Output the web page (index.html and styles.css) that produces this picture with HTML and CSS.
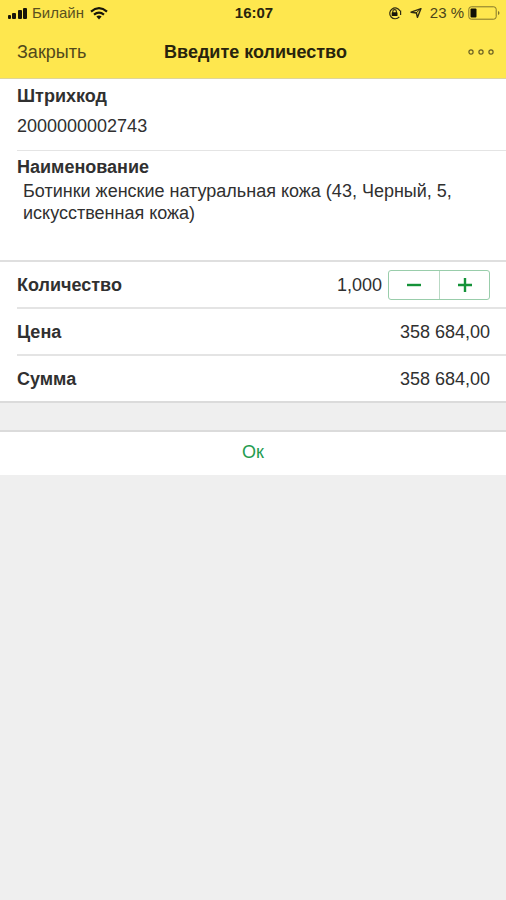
FILE: index.html
```html
<!DOCTYPE html>
<html lang="ru">
<head>
<meta charset="utf-8">
<meta name="viewport" content="width=device-width, initial-scale=1">
<title>Введите количество</title>
<link rel="stylesheet" href="styles.css">
</head>
<body>
<header class="header">
  <div class="status">
    <div class="status-left">
      <svg width="20" height="12" viewBox="0 0 20 12" fill="#17150a" aria-hidden="true"><rect x="0" y="8" width="3" height="4" rx="1"/><rect x="4" y="6" width="4" height="6" rx="1"/><rect x="10" y="3" width="4" height="9" rx="1"/><rect x="15" y="1" width="4" height="11" rx="1"/></svg>
      <span class="carrier">Билайн</span>
      <svg class="wifi" width="18" height="13" viewBox="0 0 18 13" fill="none" stroke="#17150a" stroke-width="2.2" aria-hidden="true"><path d="M1 4.6Q9-2.2 17 4.6M4 7.7Q9 3.6 14 7.7"/><path d="M6.4 9.6Q9 7.6 11.6 9.6L9 12.4Z" fill="#17150a" stroke="none"/></svg>
    </div>
    <span class="time">16:07</span>
    <div class="status-right">
      <svg width="14" height="14" viewBox="0 0 14 14" fill="none" stroke="#302c12" aria-hidden="true"><path d="M11.3 10.8A5.4 5.4 0 1 1 12 5M12.6 4.5V9" stroke-width="1.2"/><path d="M4.8 7V5.4a1.8 1.8 0 0 1 3.6 0V7" stroke-width="1.1"/><rect x="3.7" y="6.3" width="5.8" height="3.8" rx=".6" fill="#17150a" stroke="none"/></svg>
      <svg class="location" width="12" height="12" viewBox="0 0 12 12" fill="none" stroke="#302c12" stroke-width="1.4" stroke-linejoin="round" aria-hidden="true"><path d="M1 5.2L11 1.6 7.4 10.4 6.4 6Z"/><path d="M6 6L11 1.6" stroke-width="1"/></svg>
      <span class="percent">23 %</span>
      <svg width="32" height="14" viewBox="0 0 32 14" aria-hidden="true"><rect x=".8" y=".8" width="27.4" height="12.4" rx="2.5" fill="none" stroke="#81752b"/><rect x="2.5" y="2.5" width="6" height="9" rx="1" fill="#111006"/><path d="M30 5v4q1.5-.5 1.5-2T30 5Z" fill="#81752b"/></svg>
    </div>
  </div>
  <nav class="nav">
    <button class="close" type="button">Закрыть</button>
    <h1 class="title">Введите количество</h1>
    <button class="more" type="button" aria-label="Ещё"><svg width="26" height="8" viewBox="0 0 26 8" fill="none" stroke="#685e23" stroke-width="1.2" aria-hidden="true"><circle cx="3" cy="4" r="2.1"/><circle cx="13" cy="4" r="2.1"/><circle cx="23" cy="4" r="2.1"/></svg></button>
  </nav>
</header>
<main>
  <section class="panel">
    <div class="field barcode">
      <h2 class="label">Штрихкод</h2>
      <p class="value">2000000002743</p>
    </div>
    <div class="field name">
      <h2 class="label">Наименование</h2>
      <p class="description">Ботинки женские натуральная кожа (43, Черный, 5, искусственная кожа)</p>
    </div>
  </section>
  <section class="panel totals">
    <div class="row">
      <h2 class="label">Количество</h2>
      <div class="quantity">
        <output class="value">1,000</output>
        <div class="stepper">
          <button class="step" type="button" aria-label="Уменьшить"><svg width="16" height="16" viewBox="0 0 16 16" stroke="#149238" stroke-width="2.4" aria-hidden="true"><path d="M1 8H15"/></svg></button>
          <button class="step" type="button" aria-label="Увеличить"><svg width="16" height="16" viewBox="0 0 16 16" stroke="#149238" stroke-width="2.4" aria-hidden="true"><path d="M1 8H15M8 1V15"/></svg></button>
        </div>
      </div>
    </div>
    <div class="row"><h2 class="label">Цена</h2><span class="value">358 684,00</span></div>
    <div class="row"><h2 class="label">Сумма</h2><span class="value">358 684,00</span></div>
  </section>
  <button class="ok" type="button">Ок</button>
</main>
</body>
</html>
```
FILE: styles.css
```css
* { box-sizing: border-box; }

body {
  margin: 0;
  background: #efefef;
  color: #303030;
  font: 18px/24px "Liberation Sans", Arial, sans-serif;
}

h1, h2, p { margin: 0; font-size: inherit; }

button {
  padding: 0;
  border: 0;
  background: none;
  color: inherit;
  font: inherit;
}

svg { display: block; flex: none; }

.header {
  background: #fee74e;
  border-bottom: 1px solid #ded59b;
}

.status, .nav {
  display: grid;
  grid-template-columns: 1fr auto 1fr;
  align-items: center;
}

.status {
  height: 26px;
  padding: 0 6px 0 8px;
  font-size: 15px;
}

.status-left, .status-right { display: flex; align-items: center; }
.status-left { gap: 4px; }
.status-right { justify-content: flex-end; gap: 4px; }
.carrier { color: #5a511e; }
.wifi { margin-left: 2px; }
.location { margin: 0 4px; }
.percent { color: #4b4419; }
.time { color: #28240d; font-weight: bold; }

.nav { height: 52px; padding: 0 12px 0 17px; }
.close { justify-self: start; color: #51491b; }
.title { color: #28240d; font-weight: bold; }
.more { justify-self: end; }

.panel { background: #fff; }
.label { font-weight: bold; }
.field { margin-left: 17px; }

.barcode {
  display: grid;
  gap: 6px;
  padding: 5px 0 12px;
  border-bottom: 1px solid #e4e4e4;
}

.name { padding: 4px 0 36px; }
.description { padding: 1px 48px 0 6px; line-height: 22px; }

.totals {
  border-top: 2px solid #dfdfdf;
  border-bottom: 2px solid #dbdbdb;
}

.row {
  display: flex;
  align-items: center;
  justify-content: space-between;
  height: 45px;
  margin-left: 17px;
  padding-right: 16px;
}

.row + .row { height: 47px; border-top: 2px solid #e4e4e4; }
.quantity { display: flex; align-items: center; gap: 6px; }

.stepper {
  display: flex;
  height: 30px;
  border: 1px solid #99cdab;
  border-radius: 3px;
}

.step {
  display: grid;
  place-items: center;
  width: 50px;
}

.step + .step { border-left: 1px solid #b9d9c4; }

.ok {
  display: block;
  width: 100%;
  height: 45px;
  margin-top: 27px;
  padding-bottom: 3px;
  border-top: 2px solid #dbdbdb;
  background: #fff;
  color: #239c50;
}
```
